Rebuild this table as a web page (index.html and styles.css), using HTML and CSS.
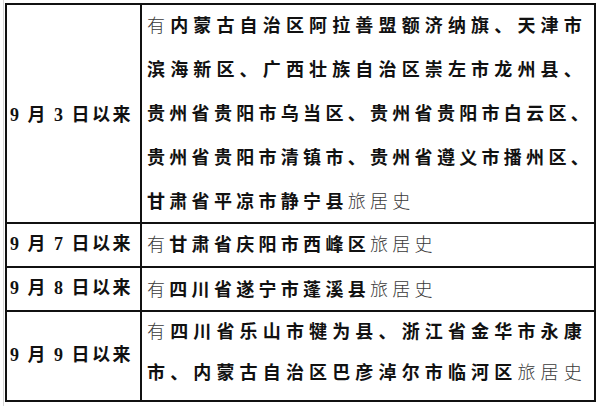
FILE: index.html
```html
<!DOCTYPE html>
<html lang="zh-CN">
<head>
<meta charset="utf-8">
<link rel="stylesheet" href="styles.css">
</head>
<body>
<div class="page">
  <div class="tbl">
    <div class="cell date r1">9 月 3 日以来</div>
    <div class="cell place r1">
      <div class="ln"><span class="lite">有</span><b>内蒙古自治区阿拉善盟额济纳旗、天津市</b></div>
      <div class="ln"><b>滨海新区、广西壮族自治区崇左市龙州县、</b></div>
      <div class="ln"><b>贵州省贵阳市乌当区、贵州省贵阳市白云区、</b></div>
      <div class="ln"><b>贵州省贵阳市清镇市、贵州省遵义市播州区、</b></div>
      <div class="ln last"><b>甘肃省平凉市静宁县</b><span class="lite">旅居史</span></div>
    </div>

    <div class="cell date r2">9 月 7 日以来</div>
    <div class="cell place r2">
      <div class="ln last"><span class="lite">有</span><b>甘肃省庆阳市西峰区</b><span class="lite">旅居史</span></div>
    </div>

    <div class="cell date r3">9 月 8 日以来</div>
    <div class="cell place r3">
      <div class="ln last"><span class="lite">有</span><b>四川省遂宁市蓬溪县</b><span class="lite">旅居史</span></div>
    </div>

    <div class="cell date r4">9 月 9 日以来</div>
    <div class="cell place r4">
      <div class="ln"><span class="lite">有</span><b>四川省乐山市犍为县、浙江省金华市永康</b></div>
      <div class="ln"><b>市、内蒙古自治区巴彦淖尔市临河区</b><span class="lite">旅居史</span></div>
    </div>
  </div>
</div>
</body>
</html>
```

FILE: styles.css
```css
html, body {
  margin: 0;
  padding: 0;
  background: #ffffff;
}
.page {
  width: 600px;
  height: 406px;
  box-sizing: border-box;
  padding: 3px 4px 0 5px;
  position: relative;
  overflow: hidden;
}
.page::before {
  content: "";
  position: absolute;
  left: 3px;
  top: 0;
  bottom: 0;
  border-left: 1px solid #d6d6d6;
}
.tbl {
  box-sizing: border-box;
  width: 591px;
  height: 399px;
  border: 2px solid #111;
  display: grid;
  grid-template-columns: 135px 1fr;
  grid-template-rows: 219px 44px 44px 88px;
  font-family: "Noto Sans CJK SC", sans-serif;
  color: #111;
}
.cell {
  box-sizing: border-box;
  border-bottom: 2px solid #111;
  display: flex;
  flex-direction: column;
  justify-content: center;
  min-width: 0;
}
.cell.r4 {
  border-bottom: none;
}
.date {
  border-right: 2px solid #111;
  align-items: center;
  font-family: "Liberation Serif", "Noto Sans CJK SC", serif;
  font-weight: 700;
  font-size: 18px;
  letter-spacing: 2.5px;
  word-spacing: -1px;
  white-space: nowrap;
  padding-left: 0;
  padding-right: 4px;
}
.place {
  padding-left: 5px;
  padding-right: 8px;
  font-size: 18px;
  letter-spacing: 4.3px;
}
.r1 { padding-bottom: 3px; }
.r2 { padding-bottom: 4px; }
.r3 { padding-bottom: 3px; }
.r4 { padding-bottom: 11px; }
.date.r1 { padding-bottom: 1px; }
.date.r2 { padding-bottom: 6px; }
.date.r3 { padding-bottom: 7px; }
.date.r4 { padding-bottom: 6px; }
.place.r1 { line-height: 44px; }
.place.r2, .place.r3 { line-height: 42px; }
.place.r4 { line-height: 41px; }
.ln {
  text-align: justify;
  text-align-last: justify;
  white-space: nowrap;
}
.ln.last {
  text-align-last: left;
}
.ln b {
  font-weight: 700;
  color: #111;
}
.lite {
  font-weight: 300;
  color: #3a3a3a;
}
```
